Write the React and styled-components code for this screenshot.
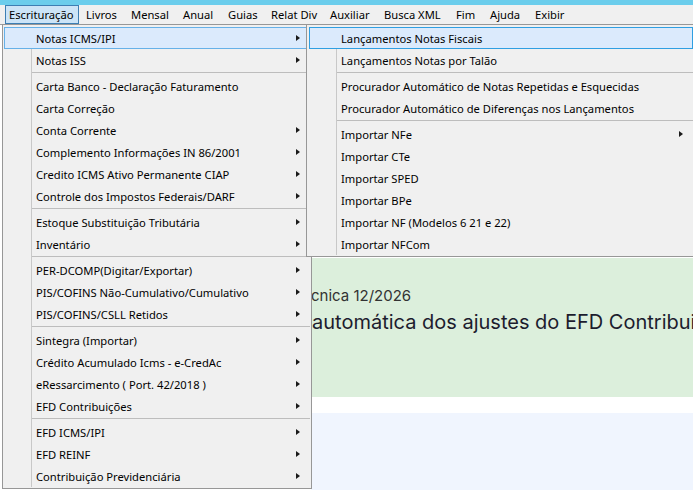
import React from 'react';
import styled, { createGlobalStyle } from 'styled-components';

const Global = createGlobalStyle`
  html, body { margin: 0; padding: 0; background: #ffffff; }
  body { font-family: 'Noto Sans', 'DejaVu Sans', sans-serif; }
  #root { width: 693px; height: 490px; }
`;

const Screen = styled.div`
  position: relative;
  width: 693px;
  height: 490px;
  overflow: hidden;
  display: flex;
  flex-direction: column;
  background: #ffffff;
`;

const TitleStrip = styled.div`
  flex: none;
  height: 5px;
  background: #6bcdec;
`;

const MenuBar = styled.nav`
  flex: none;
  height: 19px;
  display: flex;
  align-items: stretch;
  padding-left: 5px;
  background: #f0f0f0;
  border-bottom: 1px solid #a0a0a0;
`;

const BarItem = styled.div`
  box-sizing: border-box;
  flex: none;
  width: ${(p) => p.$w}px;
  margin-right: 3px;
  padding-left: 3px;
  display: flex;
  align-items: center;
  border: 1px solid ${(p) => (p.$open ? '#3d7eb3' : 'transparent')};
  background: ${(p) => (p.$open ? '#cce4f7' : 'transparent')};
  font-family: 'Noto Sans', sans-serif;
  font-size: 11.2px;
  color: #000;
  white-space: nowrap;
`;

const Workspace = styled.div`
  flex: 1;
  display: grid;
  grid-template-columns: 311px 1fr;
  min-height: 0;
`;

const Sidebar = styled.aside`
  background: #ffffff;
`;

const Main = styled.main`
  display: flex;
  flex-direction: column;
  min-width: 0;
`;

const HeaderZone = styled.div`
  flex: none;
  height: 233px;
  background: #ffffff;
`;

const Banner = styled.section`
  flex: none;
  height: 139px;
  box-sizing: border-box;
  padding-top: 28px;
  background: #dcefdc;
  white-space: nowrap;
  overflow: hidden;
  font-family: 'Inter', 'Noto Sans', sans-serif;
`;

const Kicker = styled.div`
  font-size: 15px;
  line-height: 20px;
  color: #333333;
`;

const Headline = styled.div`
  margin-top: 3px;
  margin-left: 1px;
  font-size: 20px;
  line-height: 26px;
  color: #1c1c2e;
`;

const Gap = styled.div`
  flex: none;
  height: 16px;
  background: #ffffff;
`;

const Lower = styled.section`
  flex: 1;
  background: #f0f5fe;
`;

const Menu = styled.div`
  position: absolute;
  top: 24px;
  left: ${(p) => p.$left}px;
  width: ${(p) => p.$width}px;
  box-sizing: border-box;
  padding: 2px ${(p) => p.$pad}px 1px;
  background: #f0f0f0;
  border: 1px solid #979797;
`;

const MenuList = styled.div`
  display: flex;
  flex-direction: column;
  background: linear-gradient(
    to right,
    transparent 27px,
    #c8c8c8 27px,
    #c8c8c8 28px,
    transparent 28px
  );
`;

const Item = styled.div`
  height: 22px;
  box-sizing: border-box;
  display: flex;
  align-items: center;
  padding-left: 31px;
  padding-right: 9px;
  border: 1px solid ${(p) => (p.$active ? p.$edge : 'transparent')};
  background: ${(p) => (p.$active ? '#dbeafc' : 'transparent')};
  font-family: 'Noto Sans', sans-serif;
  font-size: 11.2px;
  color: #000;
  white-space: nowrap;
`;

const Label = styled.span`
  flex: 1;
`;

const Arrow = styled.span`
  flex: none;
  width: 0;
  height: 0;
  border-left: 4px solid #1a1a1a;
  border-top: 3.5px solid transparent;
  border-bottom: 3.5px solid transparent;
`;

const Separator = styled.div`
  height: 1px;
  margin: 1px 0 2px 28px;
  background: #bdbdbd;
`;

const barItems = [
  { label: 'Escrituração', w: 74, open: true },
  { label: 'Livros', w: 42 },
  { label: 'Mensal', w: 49 },
  { label: 'Anual', w: 42 },
  { label: 'Guias', w: 40 },
  { label: 'Relat Div', w: 56 },
  { label: 'Auxiliar', w: 51 },
  { label: 'Busca XML', w: 69 },
  { label: 'Fim', w: 31 },
  { label: 'Ajuda', w: 42 },
  { label: 'Exibir', w: 42 },
];

const mainItems = [
  { label: 'Notas ICMS/IPI', sub: true, active: true },
  { label: 'Notas ISS', sub: true },
  'sep',
  { label: 'Carta Banco - Declaração Faturamento' },
  { label: 'Carta Correção' },
  { label: 'Conta Corrente', sub: true },
  { label: 'Complemento Informações IN 86/2001', sub: true },
  { label: 'Credito ICMS Ativo Permanente CIAP', sub: true },
  { label: 'Controle dos Impostos Federais/DARF', sub: true },
  'sep',
  { label: 'Estoque Substituição Tributária', sub: true },
  { label: 'Inventário', sub: true },
  'sep',
  { label: 'PER-DCOMP(Digitar/Exportar)', sub: true },
  { label: 'PIS/COFINS Não-Cumulativo/Cumulativo', sub: true },
  { label: 'PIS/COFINS/CSLL Retidos', sub: true },
  'sep',
  { label: 'Sintegra (Importar)', sub: true },
  { label: 'Crédito Acumulado Icms - e-CredAc', sub: true },
  { label: 'eRessarcimento ( Port. 42/2018 )', sub: true },
  { label: 'EFD Contribuições', sub: true },
  'sep',
  { label: 'EFD ICMS/IPI', sub: true },
  { label: 'EFD REINF', sub: true },
  { label: 'Contribuição Previdenciária', sub: true },
];

const subItems = [
  { label: 'Lançamentos Notas Fiscais', active: true },
  { label: 'Lançamentos Notas por Talão' },
  'sep',
  { label: 'Procurador Automático de Notas Repetidas e Esquecidas' },
  { label: 'Procurador Automático de Diferenças nos Lançamentos' },
  'sep',
  { label: 'Importar NFe', sub: true },
  { label: 'Importar CTe' },
  { label: 'Importar SPED' },
  { label: 'Importar BPe' },
  { label: 'Importar NF (Modelos 6 21 e 22)' },
  { label: 'Importar NFCom' },
];

function DropMenu({ items, left, width, pad, edge }) {
  return (
    <Menu $left={left} $width={width} $pad={pad}>
      <MenuList>
        {items.map((it, i) =>
          it === 'sep' ? (
            <Separator key={i} />
          ) : (
            <Item key={i} $active={it.active} $edge={edge}>
              <Label>{it.label}</Label>
              {it.sub && <Arrow />}
            </Item>
          )
        )}
      </MenuList>
    </Menu>
  );
}

export default function App() {
  return (
    <>
      <Global />
      <Screen>
        <TitleStrip />
        <MenuBar>
          {barItems.map((b) => (
            <BarItem key={b.label} $w={b.w} $open={b.open}>
              {b.label}
            </BarItem>
          ))}
        </MenuBar>
        <Workspace>
          <Sidebar />
          <Main>
            <HeaderZone />
            <Banner>
              <Kicker>cnica 12/2026</Kicker>
              <Headline>automática dos ajustes do EFD Contribuições</Headline>
            </Banner>
            <Gap />
            <Lower />
          </Main>
        </Workspace>
        <DropMenu items={mainItems} left={2} width={310} pad={1} edge="#66b1e8" />
        <DropMenu items={subItems} left={306} width={390} pad={2} edge="#2f9fe2" />
      </Screen>
    </>
  );
}
